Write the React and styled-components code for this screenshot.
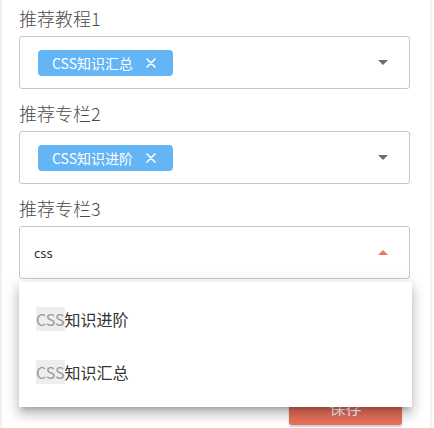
import React from "react";
import styled, { createGlobalStyle } from "styled-components";

const Global = createGlobalStyle`
  html, body { margin: 0; padding: 0; background: #fff; }
  body { font-family: "Noto Sans CJK SC", "Noto Sans", sans-serif; color: #333; }
  * { box-sizing: border-box; }
`;

const Page = styled.div`
  width: 432px;
  height: 428px;
  overflow: hidden;
  border-left: 2px solid #f0f0f0;
  border-right: 2px solid #f2f2f2;
  padding: 5px 20px 0 17px;
  background: #fff;
`;

const Field = styled.div`
  margin-bottom: 11px;
`;

const Label = styled.div`
  font-size: 18px;
  line-height: 26px;
  font-weight: 300;
  color: #4a4a4a;
  margin-bottom: 5px;
`;

const Box = styled.div`
  height: 53px;
  border: 1px solid #c6c6c6;
  border-radius: 3px;
  display: flex;
  align-items: center;
  padding: 0 21px 0 14px;
  background: #fff;
`;

const Content = styled.div`
  flex: 1;
  display: flex;
  align-items: center;
`;

const Chip = styled.span`
  display: inline-flex;
  align-items: center;
  height: 26px;
  margin-left: 4px;
  padding: 0 17px 0 14px;
  border-radius: 4px;
  background: #64b5f6;
  color: #fff;
  font-size: 14px;
  gap: 13px;
`;

const InputText = styled.span`
  font-size: 13px;
  color: #333;
  font-family: "Noto Sans", "Noto Sans CJK SC", sans-serif;
`;

const Arrow = styled.span`
  width: 0;
  height: 0;
  border-left: 5px solid transparent;
  border-right: 5px solid transparent;
  ${(p) =>
    p.$up
      ? `border-bottom: 5px solid #f07563;`
      : `border-top: 5px solid #6f6f6f;`}
`;

const MenuWrap = styled.div`
  position: absolute;
  left: 19px;
  top: 282px;
  width: 393px;
  z-index: 5;
`;

const Menu = styled.div`
  background: #fff;
  padding: 10px 0 9px;
  box-shadow: 0 5px 5px -3px rgba(0, 0, 0, 0.2), 0 8px 10px 1px rgba(0, 0, 0, 0.14),
    0 3px 14px 2px rgba(0, 0, 0, 0.12);
`;

const MenuItem = styled.div`
  height: 53px;
  display: flex;
  align-items: center;
  padding-left: 17px;
  font-size: 16px;
  color: #333;
`;

const Match = styled.span`
  background: #eeeeee;
  color: #9a9a9a;
`;

const Actions = styled.div`
  display: flex;
  justify-content: flex-end;
  padding-right: 8px;
  margin-top: 110px;
`;

const Button = styled.button`
  width: 113px;
  height: 36px;
  border: none;
  border-radius: 3px;
  background: #e9705b;
  color: #fff;
  font-family: inherit;
  font-size: 16px;
  box-shadow: 0 2px 2px rgba(0, 0, 0, 0.2);
`;

const Close = () => (
  <svg width="10" height="10" viewBox="0 0 10 10">
    <path d="M1 1 L9 9 M9 1 L1 9" stroke="#fff" strokeWidth="1.6" strokeLinecap="round" />
  </svg>
);

export default function App() {
  return (
    <>
      <Global />
      <Page>
        <Field>
          <Label>推荐教程1</Label>
          <Box>
            <Content>
              <Chip>
                CSS知识汇总
                <Close />
              </Chip>
            </Content>
            <Arrow />
          </Box>
        </Field>
        <Field>
          <Label>推荐专栏2</Label>
          <Box>
            <Content>
              <Chip>
                CSS知识进阶
                <Close />
              </Chip>
            </Content>
            <Arrow />
          </Box>
        </Field>
        <Field>
          <Label>推荐专栏3</Label>
          <Box>
            <Content>
              <InputText>css</InputText>
            </Content>
            <Arrow $up />
          </Box>
        </Field>
        <Actions>
          <Button>保存</Button>
        </Actions>
      </Page>
      <MenuWrap>
        <Menu>
          <MenuItem>
            <Match>CSS</Match>知识进阶
          </MenuItem>
          <MenuItem>
            <Match>CSS</Match>知识汇总
          </MenuItem>
        </Menu>
      </MenuWrap>
    </>
  );
}
